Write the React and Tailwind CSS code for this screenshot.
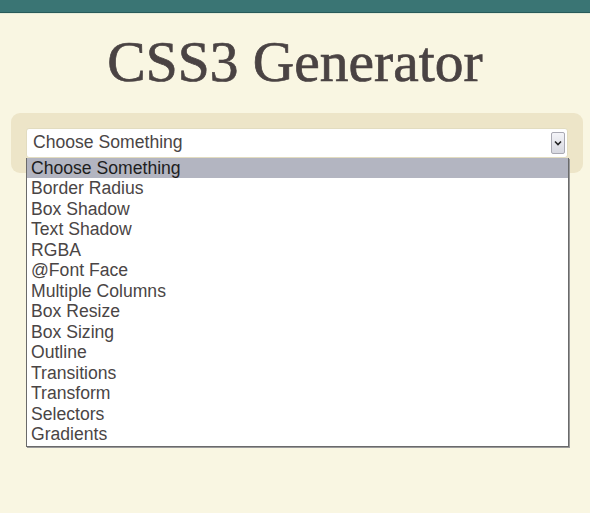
import React from 'react';

const options = [
  'Choose Something',
  'Border Radius',
  'Box Shadow',
  'Text Shadow',
  'RGBA',
  '@Font Face',
  'Multiple Columns',
  'Box Resize',
  'Box Sizing',
  'Outline',
  'Transitions',
  'Transform',
  'Selectors',
  'Gradients',
];

export default function App() {
  return (
    <div className="min-h-[513px] bg-[#f9f6e2]">
      {/* Top bar */}
      <div className="h-[13px] bg-[#3a7574] border-b border-[#285a59]" />
      <div className="h-px bg-[#e6ecd9]" />

      <h1
        className="pt-[19px] text-center text-[57.5px] leading-none text-[#4a4343] [-webkit-text-stroke:0.7px_#4a4343]"
        style={{ fontFamily: '"Liberation Serif", "DejaVu Serif", serif' }}
      >
        CSS3 Generator
      </h1>

      {/* Select panel */}
      <div className="mt-[22px] mx-[11px] w-[572px] rounded-[9px] bg-[#ede5c8] p-[15px]">
        <div className="relative" style={{ fontFamily: '"Liberation Sans", Arial, sans-serif' }}>
          <div className="flex h-[30px] items-center justify-between rounded-[3px] border border-[#e2dcc0] bg-white pl-[6px] pr-[2px]">
            <span className="text-[17.6px] text-[#4a4545]">Choose Something</span>
            <span className="flex h-[22px] w-[14px] items-center justify-center rounded-[2px] border border-[#a9a9b3] bg-gradient-to-b from-[#f4f4f8] to-[#d7d8e0]">
              <svg width="8" height="6" viewBox="0 0 8 6">
                <path d="M1 1.5 L4 4.5 L7 1.5" fill="none" stroke="#222" strokeWidth="1.6" />
              </svg>
            </span>
          </div>

          {/* Open dropdown list */}
          <ul className="absolute left-0 top-[30px] z-10 w-[543px] border border-[#6a6a6a] border-t-0 bg-white pb-px shadow-[1px_1px_0_#9a9a9a]">
            {options.map((o, i) => (
              <li
                key={o}
                className={`h-[20.5px] pl-[4px] text-[17.6px] leading-[20.5px] ${
                  i === 0 ? 'bg-[#b3b5c1] text-[#1e1e1e]' : 'text-[#4a4545]'
                }`}
              >
                {o}
              </li>
            ))}
          </ul>
        </div>
      </div>
    </div>
  );
}
